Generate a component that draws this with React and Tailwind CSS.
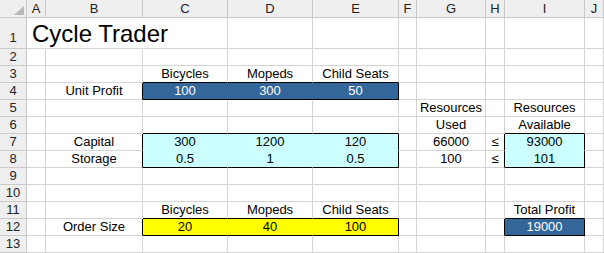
import React from 'react';

const COLS = ['A', 'B', 'C', 'D', 'E', 'F', 'G', 'H', 'I', 'J'];
const ROWS = [1, 2, 3, 4, 5, 6, 7, 8, 9, 10, 11, 12, 13];

// filled ranges with a thin black outline, columns counted from A = 1
const RANGES = [
  { r1: 4, r2: 4, c1: 3, c2: 5, fill: 'blue' },
  { r1: 7, r2: 8, c1: 3, c2: 5, fill: 'cyan' },
  { r1: 7, r2: 8, c1: 9, c2: 9, fill: 'cyan' },
  { r1: 12, r2: 12, c1: 3, c2: 5, fill: 'yellow' },
  { r1: 12, r2: 12, c1: 9, c2: 9, fill: 'blue' },
];

const CELLS = {
  'C3': 'Bicycles', 'D3': 'Mopeds', 'E3': 'Child Seats',
  'B4': 'Unit Profit', 'C4': '100', 'D4': '300', 'E4': '50',
  'G5': 'Resources', 'I5': 'Resources',
  'G6': 'Used', 'I6': 'Available',
  'B7': 'Capital', 'C7': '300', 'D7': '1200', 'E7': '120', 'G7': '66000', 'H7': '≤', 'I7': '93000',
  'B8': 'Storage', 'C8': '0.5', 'D8': '1', 'E8': '0.5', 'G8': '100', 'H8': '≤', 'I8': '101',
  'C11': 'Bicycles', 'D11': 'Mopeds', 'E11': 'Child Seats', 'I11': 'Total Profit',
  'B12': 'Order Size', 'C12': '20', 'D12': '40', 'E12': '100', 'I12': '19000',
};

const FILL = {
  blue: 'bg-[#336699] text-white',
  cyan: 'bg-[#ccffff]',
  yellow: 'bg-[#ffff00]',
};

const BORDER_R = {
  black: 'border-r-black',
  grid: 'border-r-[#d4d4d4]',
  none: 'border-r-transparent',
  blue: 'border-r-[#336699]',
  cyan: 'border-r-[#ccffff]',
  yellow: 'border-r-[#ffff00]',
};

const BORDER_B = {
  black: 'border-b-black',
  grid: 'border-b-[#d4d4d4]',
  blue: 'border-b-[#336699]',
  cyan: 'border-b-[#ccffff]',
  yellow: 'border-b-[#ffff00]',
};

const rangeAt = (r, c) =>
  RANGES.findIndex(g => r >= g.r1 && r <= g.r2 && c >= g.c1 && c <= g.c2);

const edge = (a, b) => {
  if (a !== b && (a >= 0 || b >= 0)) return 'black';
  if (a >= 0) return RANGES[a].fill;
  return 'grid';
};

const Cell = ({ r, c }) => {
  const id = rangeAt(r, c);
  let right = edge(id, rangeAt(r, c + 1));
  const bottom = edge(id, rangeAt(r + 1, c));
  // the title spills across A1:C1, so those gridlines are hidden
  if (r === 1 && c < 3) right = 'none';
  const text = CELLS[COLS[c - 1] + r];
  const fill = id >= 0 ? FILL[RANGES[id].fill] : '';

  return (
    <div className={`border-r border-b ${BORDER_R[right]} ${BORDER_B[bottom]} ${fill} flex items-center justify-center min-w-0 leading-4 text-[13px] whitespace-nowrap`}>
      {text}
    </div>
  );
};

export default function App() {
  return (
    <div className="w-[604px] h-[253px] bg-white overflow-hidden text-black" style={{ fontFamily: '"Liberation Sans", Arial, sans-serif' }}>
      <div className="grid grid-cols-[27px_19px_97px_85px_85px_86px_18px_69px_19px_80px_19px] grid-rows-[18px_31px_repeat(12,17px)]">
        {/* corner */}
        <div className="border-r border-b border-[#c9c9c9] bg-[#efefef] flex items-end justify-end pr-[2px] pb-[2px]">
          <svg width="10" height="9" viewBox="0 0 10 9">
            <polygon points="10,0 10,9 0,9" fill="#b8b8b8" />
          </svg>
        </div>
        {COLS.map(col => (
          <div key={col} className="border-r border-b border-[#c9c9c9] bg-[#efefef] flex items-center justify-center text-[13px] leading-4 text-[#222]">
            {col}
          </div>
        ))}

        {ROWS.map(r => (
          <React.Fragment key={r}>
            <div className={`border-r border-b border-[#c9c9c9] bg-[#efefef] flex justify-center text-[13px] leading-4 text-[#222] ${r === 1 ? 'items-end pb-[2px]' : 'items-center'}`}>
              {r}
            </div>
            {r === 1 ? (
              <>
                <div className="border-r border-b border-r-transparent border-b-[#d4d4d4] flex items-end pl-[5px] pb-[2px] overflow-visible whitespace-nowrap text-[24px] leading-none">
                  Cycle Trader
                </div>
                {COLS.slice(1).map((_, i) => <Cell key={i} r={1} c={i + 2} />)}
              </>
            ) : (
              COLS.map((_, i) => <Cell key={i} r={r} c={i + 1} />)
            )}
          </React.Fragment>
        ))}
      </div>
    </div>
  );
}
